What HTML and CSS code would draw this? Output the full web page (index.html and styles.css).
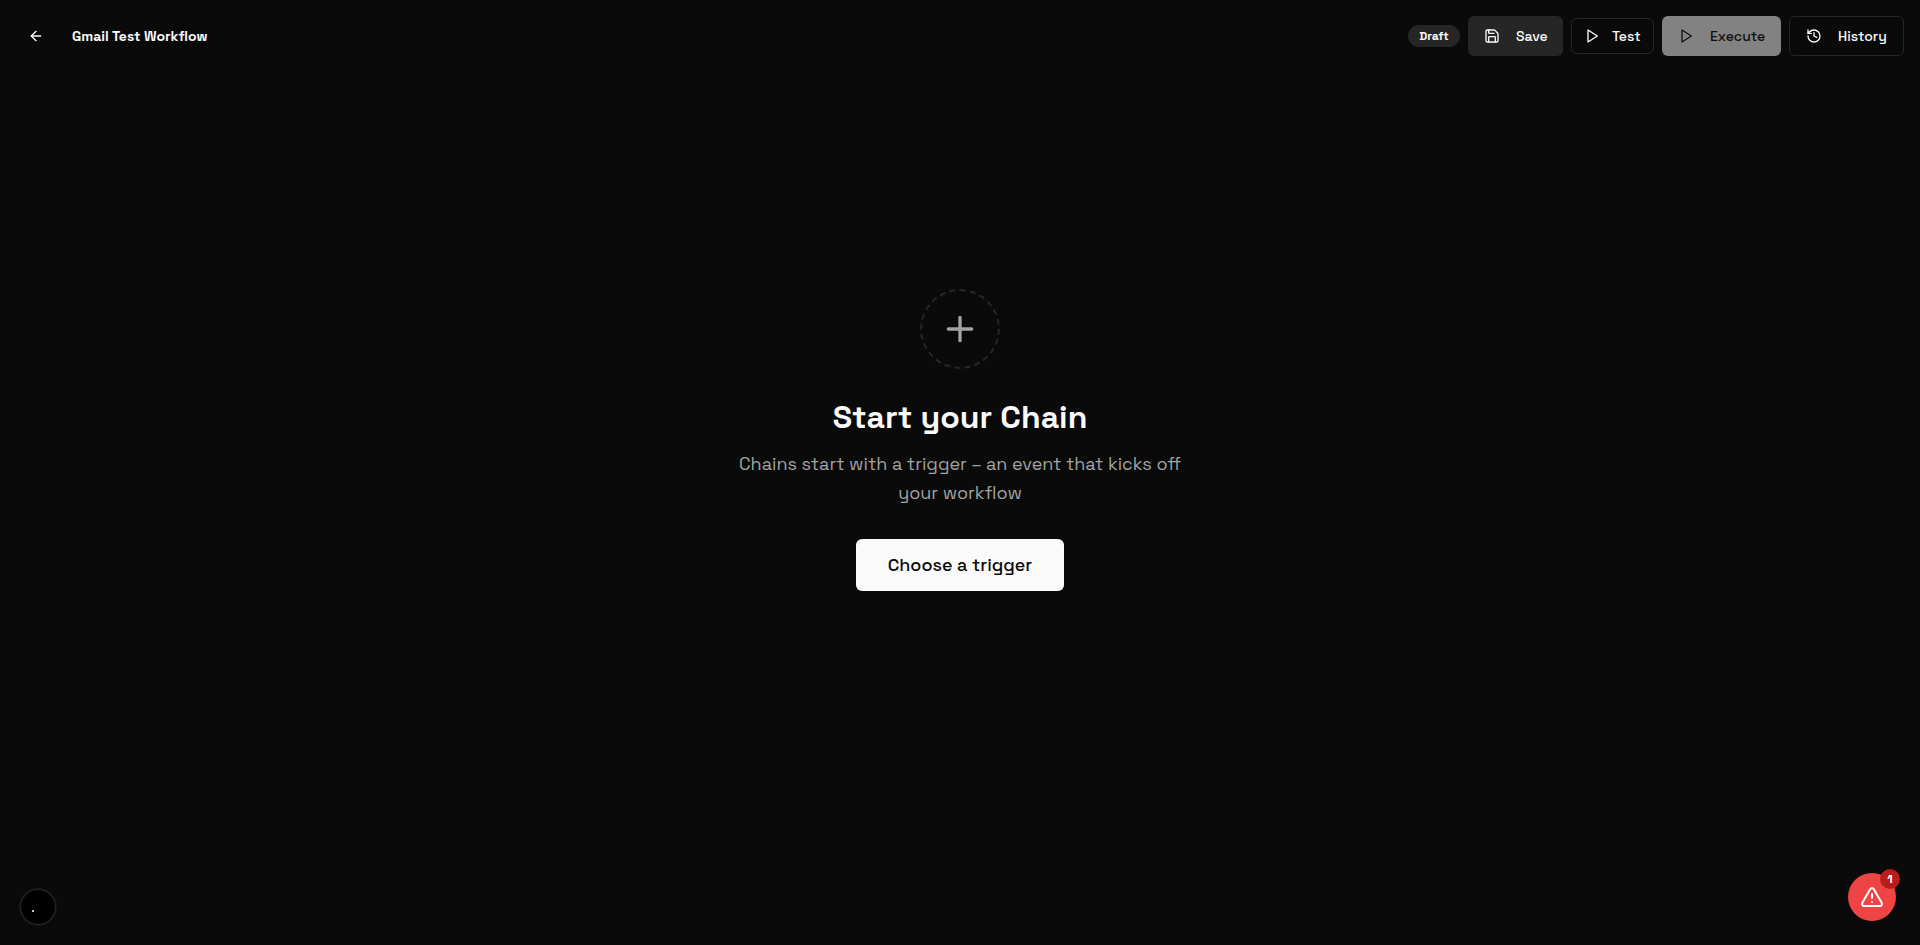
FILE: index.html
```html
<!DOCTYPE html>
<html lang="en">
<head>
<meta charset="utf-8">
<title>Gmail Test Workflow</title>
<link rel="stylesheet" href="styles.css">
</head>
<body>
<div class="app">
  <header class="topbar">
    <div class="topbar-left">
      <button class="back" aria-label="Back"><svg class="icon" viewBox="0 0 24 24"><path d="m12 19-7-7 7-7"/><path d="M19 12H5"/></svg></button>
      <h1 class="name">Gmail Test Workflow</h1>
    </div>
    <div class="actions">
      <span class="badge"><span class="badge-text">Draft</span></span>
      <button class="btn save"><svg class="icon" viewBox="0 0 24 24"><path d="M15.2 3a2 2 0 0 1 1.4.6l3.8 3.8a2 2 0 0 1 .6 1.4V19a2 2 0 0 1-2 2H5a2 2 0 0 1-2-2V5a2 2 0 0 1 2-2z"/><path d="M17 21v-7a1 1 0 0 0-1-1H8a1 1 0 0 0-1 1v7"/><path d="M7 3v4a1 1 0 0 0 1 1h7"/></svg><span class="label">Save</span></button>
      <button class="btn test"><svg class="icon" viewBox="0 0 24 24"><polygon points="6 3 20 12 6 21 6 3"/></svg><span class="label">Test</span></button>
      <button class="btn execute" disabled><svg class="icon" viewBox="0 0 24 24"><polygon points="6 3 20 12 6 21 6 3"/></svg><span class="label">Execute</span></button>
      <button class="btn history"><svg class="icon" viewBox="0 0 24 24"><path d="M3 12a9 9 0 1 0 9-9 9.75 9.75 0 0 0-6.74 2.74L3 8"/><path d="M3 3v5h5"/><path d="M12 7v5l4 2"/></svg><span class="label">History</span></button>
    </div>
  </header>
  <main class="empty">
    <div class="ring"><svg class="icon plus" viewBox="0 0 24 24"><path d="M5 12h14"/><path d="M12 5v14"/></svg></div>
    <h2 class="heading">Start your Chain</h2>
    <p class="copy">Chains start with a trigger – an event that kicks off <span class="copy-end">your workflow</span></p>
    <button class="trigger">Choose a trigger</button>
  </main>
  <div class="indicator"><span class="dot"></span></div>
  <button class="alert" aria-label="Errors"><svg class="icon alert-icon" viewBox="0 0 24 24"><path d="m21.73 18-8-14a2 2 0 0 0-3.48 0l-8 14A2 2 0 0 0 4 21h16a2 2 0 0 0 1.73-3"/><path d="M12 9v4"/><path d="M12 17h.01"/></svg><span class="count">1</span></button>
</div>
</body>
</html>
```
FILE: styles.css
```css
* { box-sizing: border-box; }
body { margin: 0; background: #0a0a0a; color: #fafafa; font-family: "Space Grotesk", Inter, "Liberation Sans", sans-serif; }
button { font: inherit; color: inherit; margin: 0; border: 0; padding: 0; background: none; }
.app { position: relative; height: 945px; overflow: hidden; }
.icon { width: 16px; height: 16px; flex: none; fill: none; stroke: currentColor; stroke-width: 2; stroke-linecap: round; stroke-linejoin: round; }
.topbar { display: flex; align-items: center; justify-content: space-between; height: 72px; padding: 0 16px; }
.topbar-left { display: flex; align-items: center; gap: 16px; }
.back { display: flex; align-items: center; justify-content: center; width: 40px; height: 40px; }
.name { margin: 0; font-size: 14px; line-height: 20px; font-weight: 600; white-space: nowrap; }
.actions { display: flex; align-items: center; gap: 8px; }
.badge { display: flex; align-items: center; justify-content: center; width: 52px; height: 22px; border-radius: 11px; background: #262626; font-size: 12px; line-height: 16px; font-weight: 600; }
.btn { display: flex; align-items: center; gap: 16px; height: 40px; padding: 0 16px; border-radius: 6px; font-size: 14px; line-height: 20px; font-weight: 500; white-space: nowrap; }
.save { width: 95px; background: #262626; }
.test { width: 83px; height: 36px; padding: 0 12px; gap: 12px; border: 1px solid #262626; }
.execute { width: 119px; background: #fafafa; color: #171717; opacity: .5; }
.history { width: 115px; border: 1px solid #262626; }
.empty { display: flex; flex-direction: column; align-items: center; padding-top: 217px; }
.ring { display: flex; align-items: center; justify-content: center; width: 80px; height: 80px; border: 2px dashed #262626; border-radius: 50%; color: #a3a3a3; }
.plus { width: 40px; height: 40px; }
.heading { margin: 28px 0 0; font-size: 32px; line-height: 40px; font-weight: 700; letter-spacing: 0; white-space: nowrap; }
.copy { width: 470px; margin: 12px 0 0; color: #a3a3a3; font-size: 18px; line-height: 29px; text-align: center; white-space: nowrap; }
.copy-end { display: block; }
.trigger { width: 208px; height: 52px; margin-top: 32px; border-radius: 6px; background: #fafafa; color: #0a0a0a; font-size: 18px; line-height: 28px; font-weight: 500; white-space: nowrap; }
.indicator { position: absolute; left: 20px; bottom: 20px; width: 36px; height: 36px; border-radius: 50%; background: #000; box-shadow: 0 0 0 1px #171717, inset 0 0 0 1px #292929; }
.dot { position: absolute; left: 12px; top: 21px; width: 2px; height: 2px; background: #c4c4c4; }
.alert { position: absolute; right: 24px; bottom: 24px; display: flex; align-items: center; justify-content: center; width: 48px; height: 48px; border-radius: 50%; background: #ef4444; color: #fff; box-shadow: 0 10px 15px -3px rgba(0,0,0,.1); }
.alert-icon { width: 24px; height: 24px; }
.count { position: absolute; top: -4px; right: -4px; width: 20px; height: 20px; border-radius: 50%; background: #b91c1c; font-size: 12px; line-height: 20px; font-weight: 700; text-align: center; }
```
